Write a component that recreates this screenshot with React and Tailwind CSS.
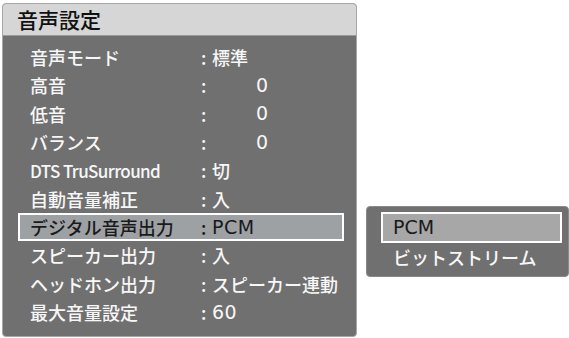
import React from "react";

const rows = [
  { label: "音声モード", value: "標準" },
  { label: "高音", value: "0", num: true },
  { label: "低音", value: "0", num: true },
  { label: "バランス", value: "0", num: true },
  { label: "DTS TruSurround", value: "切", latin: true },
  { label: "自動音量補正", value: "入" },
  { label: "デジタル音声出力", value: "PCM", active: true, wide: true },
  { label: "スピーカー出力", value: "入" },
  { label: "ヘッドホン出力", value: "スピーカー連動" },
  { label: "最大音量設定", value: "60", wide: true },
];

export default function App() {
  return (
    <div
      className="w-[569px] h-[338px] bg-white flex items-start overflow-hidden"
      style={{ fontFamily: '"Noto Sans CJK JP", "Noto Sans", sans-serif' }}
    >
      <div className="ml-[2px] mt-[3px] w-[355px] h-[334px] rounded-[4px] border border-[#a8a8a8] overflow-hidden flex flex-col bg-[#707070]">
        <div className="h-[32px] bg-[#d6d6d6] border-b border-[#9a9a9a] flex items-center pl-[14px]">
          <span className="text-[21px] font-medium text-[#111] leading-none">音声設定</span>
        </div>
        <div className="flex-1 pt-[7px] pl-[15px] pr-[12px]">
          {rows.map((r, i) => (
            <div
              key={i}
              className={
                "h-[28.33px] flex items-center pl-[10px] text-[18px] leading-none font-medium " +
                (r.active
                  ? "border-2 border-white bg-[#9ea1a4] text-[#1a1a1a]"
                  : "border-2 border-transparent text-[#f7f7f7]")
              }
            >
              <span
                className={
                  "w-[171px] shrink-0 whitespace-nowrap " +
                  (r.latin ? "tracking-[-0.6px] text-[17px]" : "")
                }
              >
                {r.label}
              </span>
              <span className="w-[11px] shrink-0">:</span>
              {r.num ? (
                <span className="pl-[44px] text-[19px] font-['DejaVu_Sans',sans-serif]">{r.value}</span>
              ) : r.wide ? (
                <span className="text-[19px] tracking-[0.5px] font-['DejaVu_Sans',sans-serif]">{r.value}</span>
              ) : (
                <span>{r.value}</span>
              )}
            </div>
          ))}
        </div>
      </div>
      <div className="ml-[9px] mt-[206px] w-[203px] h-[71px] rounded-[4px] border border-[#8a8a8a] bg-[#707070] pt-[5px] pl-[14px] pr-[6px]">
        <div className="h-[31px] border-2 border-white bg-[#a7a7a7] flex items-center pl-[10px] text-[19px] leading-none text-[#1a1a1a] font-['DejaVu_Sans',sans-serif]">
          PCM
        </div>
        <div className="h-[28px] flex items-center pl-[12px] text-[18px] font-medium leading-none text-[#f7f7f7]">
          ビットストリーム
        </div>
      </div>
    </div>
  );
}
